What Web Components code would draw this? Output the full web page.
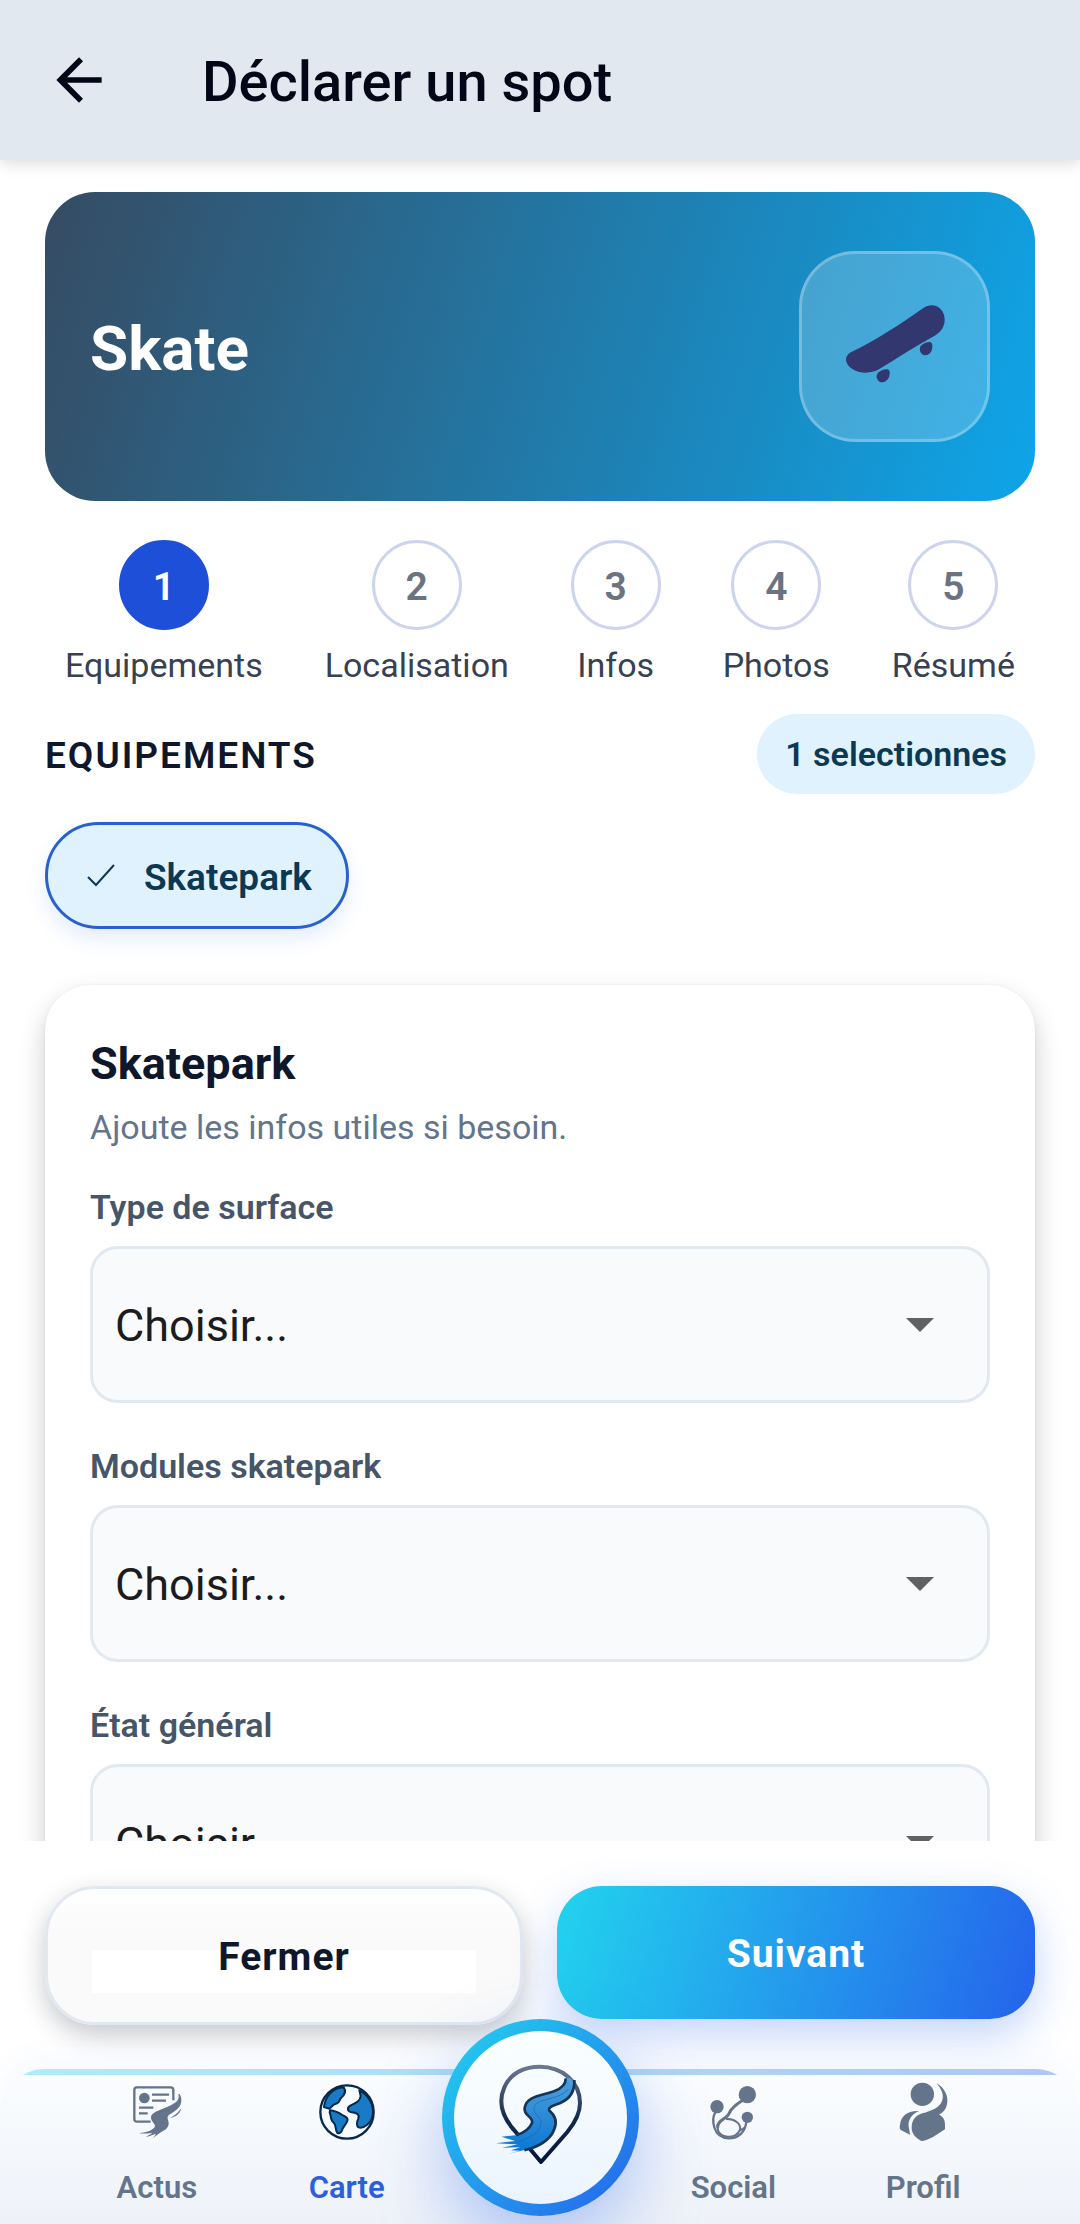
<!DOCTYPE html>
<html lang="fr">
<head>
<meta charset="utf-8">
<meta name="viewport" content="width=device-width, initial-scale=1">
<title>Déclarer un spot</title>
<style>
  html, body { margin: 0; height: 100%; }
  body { font-family: Roboto, "Liberation Sans", sans-serif; color: #0f172a; background: #fff; }
</style>
</head>
<body>
<spot-app>
  <app-header slot="header" heading="Déclarer un spot"></app-header>
  <sport-hero heading="Skate"></sport-hero>
  <step-list current="1" steps="Equipements,Localisation,Infos,Photos,Résumé"></step-list>
  <section-head heading="Equipements">1 selectionnes</section-head>
  <choice-chip>Skatepark</choice-chip>
  <info-card heading="Skatepark" hint="Ajoute les infos utiles si besoin.">
    <select-field label="Type de surface"></select-field>
    <select-field label="Modules skatepark"></select-field>
    <select-field label="État général"></select-field>
  </info-card>
  <action-bar slot="actions">
    <action-button>Fermer</action-button>
    <action-button primary>Suivant</action-button>
  </action-bar>
  <tab-bar slot="tabs"></tab-bar>
</spot-app>

<script>
const define = (name, render) => customElements.define(name, class extends HTMLElement {
  connectedCallback() {
    if (this.shadowRoot) return;
    this.attachShadow({ mode: 'open' }).innerHTML = render(this);
  }
});
const base = ':host,*{box-sizing:border-box}h1,h2,h3,p,ol{margin:0;padding:0}button,select{font-family:inherit;margin:0}';

define('spot-app', () => `<style>${base}
  :host { display: flex; flex-direction: column; height: 100vh; }
  header, footer, nav { flex: none; position: relative; }
  header { z-index: 1; }
  nav { z-index: 2; }
  main { flex: 1; min-height: 0; overflow-y: auto; scrollbar-width: none; padding: 32px 45px 45px; }
  </style>
  <header><slot name="header"></slot></header>
  <main><slot></slot></main>
  <footer><slot name="actions"></slot></footer>
  <nav><slot name="tabs"></slot></nav>`);

define('app-header', el => `<style>${base}
  :host { display: flex; align-items: center; gap: 78px; height: 160px; padding: 0 45px;
    background: #e2e8f0; box-shadow: 0 2px 16px rgba(0,0,0,.16); }
  button { display: flex; align-items: center; width: 79px; height: 68px; padding: 0; border: 0; background: none; }
  svg { width: 68px; height: 68px; }
  h1 { padding-top: 3px; font-size: 56px; line-height: 66px; font-weight: 500; color: #020617; }
  </style>
  <button aria-label="Retour"><svg viewBox="0 0 24 24" fill="#020617"><path d="M20 11H7.83l5.59-5.59L12 4l-8 8 8 8 1.41-1.41L7.83 13H20z"/></svg></button>
  <h1>${el.getAttribute('heading')}</h1>`);

define('sport-hero', el => `<style>${base}
  :host { display: flex; align-items: center; justify-content: space-between; padding: 59px 45px;
    border-radius: 50px; background: linear-gradient(107deg, #364b62, #0ea5e9); }
  h2 { padding-top: 4px; font-size: 62px; line-height: 73px; font-weight: 700; color: #fff; }
  .tile { display: flex; align-items: center; justify-content: center; width: 191px; height: 191px;
    border: 3px solid rgba(255,255,255,.25); border-radius: 56px; background: rgba(255,255,255,.2); }
  svg { width: 110px; height: 110px; }
  </style>
  <h2>${el.getAttribute('heading')}</h2>
  <div class="tile"><svg viewBox="418 454 330 330" fill="#32376f"><path d="M452 634C525 599 600 550 668 502C697 482 732 500 732 537C732 559 720 574 702 585C647 614 594 650 540 683C514 700 477 700 454 684C431 669 430 645 452 634Z"/><path d="M660 616C666 609 678 604 688 604C696 606 696 617 694 626C691 640 678 647 667 642C658 637 655 625 660 616Z"/><path d="M532 696C539 690 551 684 561 686C569 689 568 701 565 709C560 722 548 728 537 723C527 717 525 705 532 696Z"/></svg></div>`);

define('step-list', el => {
  const current = +el.getAttribute('current');
  const items = el.getAttribute('steps').split(',').map((t, i) =>
    `<li${i + 1 === current ? ' aria-current="step"' : ''}><span class="dot">${i + 1}</span><span>${t}</span></li>`).join('');
  return `<style>${base}
  :host { display: block; margin-top: 39px; }
  ol { display: flex; justify-content: space-between; padding: 0 20px; list-style: none; }
  li { display: flex; flex-direction: column; align-items: center; gap: 13px; font-size: 34px; line-height: 45px; color: #374151; }
  .dot { display: flex; align-items: center; justify-content: center; width: 90px; height: 90px; padding-top: 5px; border: 3px solid #cdd5ee;
    border-radius: 50%; font-size: 39px; font-weight: 600; color: #6b7280; background: #fff; }
  [aria-current] .dot { background: #1d4fd8; border-color: #1d4fd8; color: #fff; }
  </style><ol>${items}</ol>`;
});

define('section-head', el => `<style>${base}
  :host { display: flex; align-items: center; justify-content: space-between; margin-top: 26px; }
  h2 { padding-top: 2px; font-size: 37px; line-height: 45px; font-weight: 600; text-transform: uppercase; letter-spacing: 2px; }
  span { padding: 18px 28px 17px; border-radius: 40px; background: #e0f2fe; color: #0b3954; font-size: 34px; line-height: 45px; font-weight: 600; }
  </style><h2>${el.getAttribute('heading')}</h2><span><slot></slot></span>`);

define('choice-chip', () => `<style>${base}
  :host { display: flex; margin-top: 28px; }
  button { display: flex; align-items: center; gap: 28px; height: 107px; padding: 3px 34px 0 38px; border: 3px solid #2861cf;
    border-radius: 54px; background: #e0f2fe; color: #0b3954; font-size: 37px; line-height: 45px; font-weight: 600;
    box-shadow: 0 10px 20px rgba(37,99,235,.12); }
  svg { width: 30px; height: 30px; }
  </style><button aria-pressed="true"><svg viewBox="0 0 30 30" fill="none" stroke="#0b3954" stroke-width="2"><path d="M2 15l8 8L28 3"/></svg><slot></slot></button>`);

define('info-card', el => `<style>${base}
  :host { display: flex; flex-direction: column; margin-top: 56px; padding: 49px 45px 45px; border-radius: 45px;
    background: #fff; box-shadow: 0 12px 26px rgba(0,0,0,.2), 0 0 3px rgba(0,0,0,.06); }
  h3 { font-size: 45px; line-height: 60px; font-weight: 700; }
  p { margin-top: 11px; font-size: 34px; line-height: 45px; color: #64748b; }
  .fields { display: flex; flex-direction: column; gap: 41px; margin-top: 35px; }
  </style><h3>${el.getAttribute('heading')}</h3><p>${el.getAttribute('hint')}</p><div class="fields"><slot></slot></div>`);

define('select-field', el => `<style>${base}
  :host { display: flex; flex-direction: column; gap: 16px; }
  label { font-size: 34px; line-height: 45px; font-weight: 600; color: #475569; }
  .box { display: grid; align-items: center; }
  .box > * { grid-area: 1 / 1; }
  select { appearance: none; width: 100%; height: 157px; padding: 2px 90px 0 22px; border: 3px solid #e2e8f0; border-radius: 28px;
    background: #f8fafc; color: #1c1c1e; font-size: 45px; line-height: 53px; }
  svg { justify-self: end; width: 28px; height: 14px; margin-right: 56px; pointer-events: none; }
  </style><label for="choice">${el.getAttribute('label')}</label>
  <div class="box"><select id="choice"><option>Choisir...</option></select>
  <svg viewBox="0 0 28 14" fill="#616163"><path d="M0 0h28L14 14z"/></svg></div>`);

define('action-bar', () => `<style>${base}
  :host { display: grid; grid-template-columns: 1fr 1fr; align-items: start; gap: 34px; height: 228px; padding: 45px; background: #fff; }
  </style><slot></slot>`);

define('action-button', el => `<style>${base}
  :host { display: block; }
  button { display: block; width: 100%; padding: 46px 43px 42px; border: 3px solid #e2e8f0; border-radius: 50px; color: #0f172a;
    background: linear-gradient(#fff, #fff) 50% 68% / 384px 43px no-repeat, linear-gradient(#fff, #fafafa 30%);
    font-size: 39px; line-height: 45px; font-weight: 700; letter-spacing: 1px; box-shadow: 0 10px 26px rgba(15,23,42,.24); }
  :host([primary]) button { border: 0; color: #fff; border-radius: 45px; background: linear-gradient(106deg, #22d3ee, #2563eb);
    box-shadow: 0 16px 44px rgba(37,99,235,.28); }
  </style><button><slot></slot></button>`);

const icons = {
  actus: `<svg viewBox="60 72 168 168" fill="#64748b"><path d="M193 121V90Q193 82 185 82H83Q76 82 76 90V177Q76 185 84 185H125" fill="none" stroke="#64748b" stroke-width="7"/><circle cx="106" cy="114" r="16"/><path d="M129 104h51M129 122h42M90 143h43M90 160h26" stroke="#64748b" stroke-width="7"/><path d="M211 101C222 117 218 137 202 150C188 161 173 165 176 176C181 190 181 201 166 211C153 218 143 225 132 235C136 228 139 225 141 221C129 225 119 230 110 230C119 226 126 222 130 218C118 220 105 222 91 220C111 217 123 214 134 205C143 197 135 193 129 182C122 169 128 162 140 155L181 138C202 129 213 119 208 103Z"/><path d="M216 146C213 160 203 169 184 174C197 166 207 159 214 148Z"/></svg>`,
  carte: `<svg viewBox="630 72 168 168"><circle cx="714" cy="156" r="80" fill="#f7fbff"/><g fill="#197bc5" stroke="#06294b" stroke-width="6" stroke-linejoin="round"><path d="M645 141C648 110 672 83 704 82C714 95 706 105 696 114C691 119 692 127 684 130C672 133 668 140 662 146Z"/><path d="M751 91C780 105 796 137 791 166C788 188 764 207 749 202C740 196 744 184 748 175C753 162 741 158 728 157C716 155 713 145 722 138C738 130 754 124 755 108Z"/><path d="M663 151C677 152 689 158 700 165C709 171 719 171 715 183C711 194 700 201 697 215Q692 222 685 219C677 207 683 195 673 187C663 179 667 165 662 158Z"/></g><circle cx="714" cy="156" r="80" fill="none" stroke="#06294b" stroke-width="7"/></svg>`,
  social: `<svg viewBox="73 72 168 168" fill="none" stroke="#64748b"><g fill="#64748b" stroke="none"><circle cx="200" cy="104" r="26"/><circle cx="109" cy="140" r="20"/><circle cx="200" cy="172" r="17"/></g><path d="M105 155C91 178 96 234 144 235C173 235 195 216 197 183" stroke-width="7"/><path d="M186 121C164 135 151 145 145 161C138 177 108 181 111 204" stroke-width="9"/><path d="M111 204C111 237 168 240 178 209C182 192 162 175 136 177M176 213L192 203" stroke-width="6"/></svg>`,
  profil: `<svg viewBox="646 72 168 168" fill="#64748b"><circle cx="728" cy="103" r="35"/><path d="M770 69C795 83 805 108 803 125C801 146 791 158 778 163C795 175 797 182 796 208L760 231Q728 247 724 242C710 235 694 220 696 200C697 178 711 165 728 160C754 153 782 143 788 120C793 102 785 87 770 69Z"/><path d="M718 153C697 161 682 181 688 205L691 224L665 211Q658 206 661 194C664 168 684 151 718 153Z"/></svg>`,
  logo: `<svg viewBox="219 208 288 288"><defs><linearGradient id="pin" x1="0" y1="0" x2="0" y2="1"><stop offset="0" stop-color="#6b7790"/><stop offset=".55" stop-color="#13294c"/><stop offset="1" stop-color="#04163a"/></linearGradient><linearGradient id="road" x1="0" y1="0" x2="0" y2="1"><stop offset="0" stop-color="#4f9fda"/><stop offset="1" stop-color="#0876d3"/></linearGradient></defs>
    <path d="M366 484L292 396C249 350 236 305 256 260C275 215 319 198 363 198C428 198 483 242 483 307C483 339 468 366 445 394Z" fill="none" stroke="url(#pin)" stroke-width="12" stroke-linejoin="round"/>
    <path d="M440 233C453 226 465 238 465 257C465 279 447 297 424 307C406 315 389 315 390 329C407 343 415 363 406 385C397 411 370 431 337 443L264 461L302 450L276 449L304 440L249 441L296 431L231 428L288 421L247 408L290 404C315 397 331 386 339 367C344 348 313 346 317 321C324 285 370 285 405 272C430 262 441 250 440 233Z" fill="url(#road)"/>
    <path d="M291 404C315 397 331 386 339 367C344 348 313 346 317 321C324 285 370 285 405 272C430 262 441 250 440 233M466 238C468 279 447 297 424 307C406 315 389 315 390 329C407 343 415 363 406 385C397 411 370 431 337 443L316 449" fill="none" stroke="#173355" stroke-width="8"/>
    <path d="M448 265C421 300 346 292 345 323C342 342 371 350 366 371C361 398 330 413 289 426" fill="none" stroke="#1765ae" stroke-width="2"/></svg>`
};

define('tab-bar', () => `<style>${base}
  :host { display: grid; grid-template-columns: repeat(5, 1fr); align-items: start; height: 155px; padding: 0 62px; position: relative; }
  :host::before { content: ""; position: absolute; inset: 0; border-radius: 45px 45px 0 0;
    background: linear-gradient(90deg, rgba(34,211,238,.36), rgba(37,99,235,.36)) top / 100% 6px no-repeat, linear-gradient(#fbfdff, #eef2f8);
    box-shadow: 0 -12px 30px rgba(37,99,235,.04); }
  a { position: relative; display: flex; flex-direction: column; align-items: center; gap: 29px; padding-top: 15px;
    color: #64748b; font-size: 31px; line-height: 38px; font-weight: 600; text-decoration: none; }
  a[aria-current] { color: #2b5fdc; }
  a svg { width: 56px; height: 56px; overflow: visible; }
  button { position: relative; justify-self: center; display: flex; align-items: center; justify-content: center; width: 197px; height: 197px;
    margin: -50px 0 0; padding: 0; border: 12px solid transparent; border-radius: 50%;
    background: linear-gradient(#fbffff, #ebf4fe) padding-box, linear-gradient(135deg, #22d3ee, #2563eb) border-box;
    box-shadow: 0 28px 70px rgba(37,99,235,.34); }
  button svg { width: 96px; height: 96px; overflow: visible; }
  </style>
  <a href="#actus">${icons.actus}<span>Actus</span></a>
  <a href="#carte" aria-current="page">${icons.carte}<span>Carte</span></a>
  <button aria-label="Déclarer">${icons.logo}</button>
  <a href="#social">${icons.social}<span>Social</span></a>
  <a href="#profil">${icons.profil}<span>Profil</span></a>`);
</script>
</body>
</html>
